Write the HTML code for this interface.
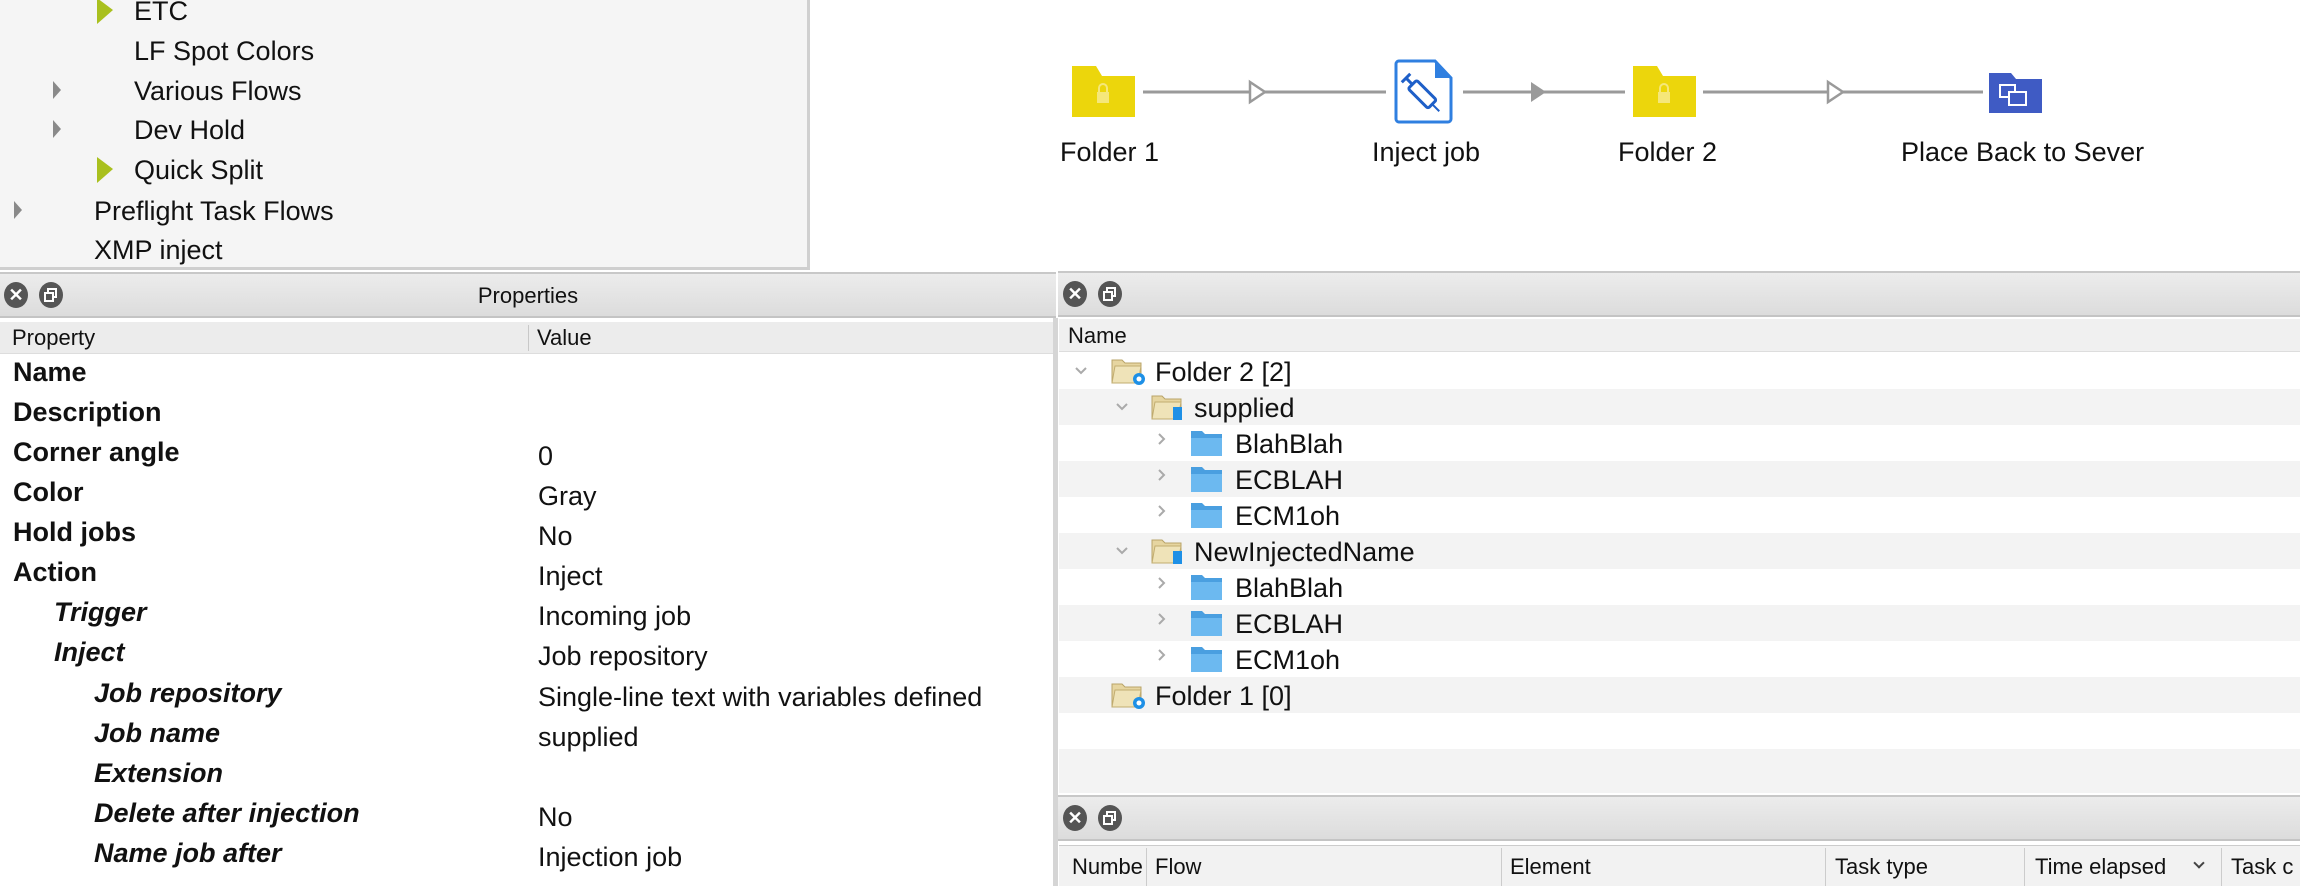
<!DOCTYPE html>
<html><head><meta charset="utf-8"><style>
*{margin:0;padding:0;box-sizing:border-box}
body{width:2300px;height:886px;overflow:hidden;background:#fff;font-family:"Liberation Sans",Arial,sans-serif;color:#111;position:relative}
.a{position:absolute;white-space:nowrap}
.t{font-size:27px;line-height:30px}
.b{font-weight:bold}
.i{font-style:italic;font-weight:bold}
.bar{position:absolute;background:linear-gradient(#ececec,#dcdcdc);border-top:2px solid #c8c8c8;border-bottom:2px solid #c4c4c4}
.hdr{position:absolute;background:#ececec;border-bottom:1px solid #ddd;font-size:21px;color:#222}
.btn{position:absolute;width:24px;height:26px;border-radius:50%;background:#555}
.row{position:absolute;left:1059px;width:1241px;height:36px}
.g{background:#f3f3f3}
.chev{position:absolute;width:10px;height:10px;border-right:2px solid #aaa;border-bottom:2px solid #aaa}
.tr{font-size:27px;line-height:36px}
</style></head><body>

<div class="a" style="left:0;top:0;width:810px;height:270px;background:#f5f5f5;border-right:3px solid #d0d0d0;border-bottom:3px solid #cfcfcf"></div>
<div class="a t" style="left:134px;top:-4px">ETC</div>
<div class="a t" style="left:134px;top:36px">LF Spot Colors</div>
<div class="a t" style="left:134px;top:76px">Various Flows</div>
<div class="a t" style="left:134px;top:115px">Dev Hold</div>
<div class="a t" style="left:134px;top:155px">Quick Split</div>
<div class="a t" style="left:94px;top:196px">Preflight Task Flows</div>
<div class="a t" style="left:94px;top:235px">XMP inject</div>
<svg class="a" style="left:0;top:0" width="130" height="270">
<polygon points="97,-2 113,10 97,24" fill="#a9c01e"/>
<polygon points="97,157 113,169 97,183" fill="#a9c01e"/>
<polygon points="53,81 61,90 53,99" fill="#8a8a8a"/>
<polygon points="53,120 61,129 53,138" fill="#8a8a8a"/>
<polygon points="14,201 22,210 14,219" fill="#8a8a8a"/>
</svg>

<svg class="a" style="left:813px;top:0" width="1487" height="268">
<g stroke="#9a9a9a" stroke-width="3" fill="none">
<line x1="330" y1="92" x2="573" y2="92"/>
<line x1="650" y1="92" x2="812" y2="92"/>
<line x1="890" y1="92" x2="1170" y2="92"/>
</g>
<polygon points="437,82 452,92 437,102" fill="#fff" stroke="#9a9a9a" stroke-width="2.5"/>
<polygon points="718,82 733,92 718,102" fill="#9a9a9a"/>
<polygon points="1015,82 1030,92 1015,102" fill="#fff" stroke="#9a9a9a" stroke-width="2.5"/>
<path d="M259,66 h24 l6,10 h33 v41 h-63z" fill="#ecd60c"/>
<rect x="284" y="92" width="12" height="11" fill="#f5e77a"/><path d="M286,92 v-4 a4,4 0 0 1 8,0 v4" stroke="#f5e77a" stroke-width="2" fill="none"/>
<path d="M820,66 h24 l6,10 h33 v41 h-63z" fill="#ecd60c"/>
<rect x="845" y="92" width="12" height="11" fill="#f5e77a"/><path d="M847,92 v-4 a4,4 0 0 1 8,0 v4" stroke="#f5e77a" stroke-width="2" fill="none"/>
<path d="M586,61 h36 l16,17 v41 a3,3 0 0 1 -3,3 h-49 a3,3 0 0 1 -3,-3 v-55 a3,3 0 0 1 3,-3z" fill="#fff" stroke="#2f7fe0" stroke-width="3"/>
<path d="M622,61 v17 h16z" fill="#2f7fe0"/>
<g transform="rotate(-45 610 95)"><rect x="604" y="80" width="12" height="28" rx="2" fill="#fff" stroke="#1e5fc8" stroke-width="3"/><line x1="610" y1="70" x2="610" y2="80" stroke="#1e5fc8" stroke-width="3"/><line x1="604" y1="71" x2="616" y2="71" stroke="#1e5fc8" stroke-width="3"/><line x1="610" y1="108" x2="610" y2="118" stroke="#1e5fc8" stroke-width="2"/></g>
<path d="M1176,73 h22 l5,6 h26 v34 h-53z" fill="#3f5bc4"/>
<rect x="1187" y="85" width="15" height="12" fill="none" stroke="#fff" stroke-width="2"/>
<rect x="1196" y="92" width="17" height="13" fill="#3f5bc4" stroke="#fff" stroke-width="2"/>
</svg>
<div class="a t" style="left:1060px;top:137px">Folder 1</div>
<div class="a t" style="left:1372px;top:137px">Inject job</div>
<div class="a t" style="left:1618px;top:137px">Folder 2</div>
<div class="a t" style="left:1901px;top:137px">Place Back to Sever</div>

<div class="bar" style="left:0;top:272px;width:1056px;height:46px"></div>
<div class="btn" style="left:4px;top:282px"></div><div class="btn" style="left:39px;top:282px"></div>
<div class="a" style="left:4px;top:282px;width:24px;height:26px;color:#fff;font-size:18px;font-weight:bold;text-align:center;line-height:26px">✕</div>
<svg class="a" style="left:39px;top:282px" width="24" height="26"><rect x="9" y="7" width="8" height="8" fill="none" stroke="#fff" stroke-width="2"/><rect x="6" y="11" width="8" height="8" fill="#555" stroke="#fff" stroke-width="2"/></svg>
<div class="a" style="left:0;top:280px;width:1056px;text-align:center;font-size:22px;line-height:32px">Properties</div>
<div class="hdr" style="left:0;top:322px;width:1053px;height:32px"></div>
<div class="a" style="left:528px;top:325px;width:1px;height:26px;background:#c8c8c8"></div>
<div class="a" style="left:12px;top:323px;font-size:22px;line-height:30px">Property</div>
<div class="a" style="left:537px;top:323px;font-size:22px;line-height:30px">Value</div>
<div class="a" style="left:1053px;top:318px;width:5px;height:568px;background:#d5d5d5"></div>

<div class="a t b" style="left:13px;top:357px">Name</div>
<div class="a t b" style="left:13px;top:397px">Description</div>
<div class="a t b" style="left:13px;top:437px">Corner angle</div>
<div class="a t b" style="left:13px;top:477px">Color</div>
<div class="a t b" style="left:13px;top:517px">Hold jobs</div>
<div class="a t b" style="left:13px;top:557px">Action</div>
<div class="a t i" style="left:54px;top:597px">Trigger</div>
<div class="a t i" style="left:54px;top:637px">Inject</div>
<div class="a t i" style="left:94px;top:678px">Job repository</div>
<div class="a t i" style="left:94px;top:718px">Job name</div>
<div class="a t i" style="left:94px;top:758px">Extension</div>
<div class="a t i" style="left:94px;top:798px">Delete after injection</div>
<div class="a t i" style="left:94px;top:838px">Name job after</div>

<div class="a t" style="left:538px;top:441px">0</div>
<div class="a t" style="left:538px;top:481px">Gray</div>
<div class="a t" style="left:538px;top:521px">No</div>
<div class="a t" style="left:538px;top:561px">Inject</div>
<div class="a t" style="left:538px;top:601px">Incoming job</div>
<div class="a t" style="left:538px;top:641px">Job repository</div>
<div class="a t" style="left:538px;top:682px">Single-line text with variables defined</div>
<div class="a t" style="left:538px;top:722px">supplied</div>
<div class="a t" style="left:538px;top:802px">No</div>
<div class="a t" style="left:538px;top:842px">Injection job</div>

<div class="bar" style="left:1058px;top:271px;width:1242px;height:46px"></div>
<div class="btn" style="left:1063px;top:281px"></div><div class="btn" style="left:1098px;top:281px"></div>
<div class="a" style="left:1063px;top:281px;width:24px;height:26px;color:#fff;font-size:18px;font-weight:bold;text-align:center;line-height:26px">✕</div>
<svg class="a" style="left:1098px;top:281px" width="24" height="26"><rect x="9" y="7" width="8" height="8" fill="none" stroke="#fff" stroke-width="2"/><rect x="6" y="11" width="8" height="8" fill="#555" stroke="#fff" stroke-width="2"/></svg>
<div class="hdr" style="left:1059px;top:319px;width:1241px;height:33px;background:#f0f0f0"></div>
<div class="a" style="left:1068px;top:320px;font-size:22px;line-height:32px">Name</div>

<div class="row" style="top:353px"></div>
<div class="row g" style="top:389px"></div>
<div class="row" style="top:425px"></div>
<div class="row g" style="top:461px"></div>
<div class="row" style="top:497px"></div>
<div class="row g" style="top:533px"></div>
<div class="row" style="top:569px"></div>
<div class="row g" style="top:605px"></div>
<div class="row" style="top:641px"></div>
<div class="row g" style="top:677px"></div>
<div class="row" style="top:713px;height:36px"></div>
<div class="row g" style="top:749px;height:44px"></div>

<svg class="a" style="left:1059px;top:353px" width="200" height="360">
<defs>
<g id="yf"><path d="M0,4 h10 l3,3 h16 v20 h-29z" fill="#e6d5a0" stroke="#b9a468" stroke-width="1"/><path d="M3,10 h26 l-3,17 h-26z" fill="#efe3b8" stroke="#c2ad70" stroke-width="1"/></g>
<g id="bf"><path d="M0,2 h11 l3,3 h17 v22 h-31z" fill="#4a9fe0"/><rect x="0" y="9" width="31" height="18" fill="#6cb9f0"/></g>
</defs>
<g fill="none" stroke="#aaa" stroke-width="2">
<path d="M17,15 l5,5 5,-5"/><path d="M58,51 l5,5 5,-5"/><path d="M58,195 l5,5 5,-5"/>
<path d="M100,81 l5,5 -5,5"/><path d="M100,117 l5,5 -5,5"/><path d="M100,153 l5,5 -5,5"/>
<path d="M100,225 l5,5 -5,5"/><path d="M100,261 l5,5 -5,5"/><path d="M100,297 l5,5 -5,5"/>
</g>
<use href="#yf" x="53" y="3"/><circle cx="80" cy="26" r="6" fill="#1e90e6"/><circle cx="80" cy="26" r="2.5" fill="#fff"/>
<use href="#yf" x="93" y="39"/><rect x="114" y="54" width="9" height="13" fill="#1e90e6"/>
<use href="#yf" x="93" y="183"/><rect x="114" y="198" width="9" height="13" fill="#1e90e6"/>
<use href="#yf" x="53" y="327"/><circle cx="80" cy="350" r="6" fill="#1e90e6"/><circle cx="80" cy="350" r="2.5" fill="#fff"/>
<use href="#bf" x="132" y="76"/><use href="#bf" x="132" y="112"/><use href="#bf" x="132" y="148"/>
<use href="#bf" x="132" y="220"/><use href="#bf" x="132" y="256"/><use href="#bf" x="132" y="292"/>
</svg>
<div class="a tr" style="left:1155px;top:354px">Folder 2 [2]</div>
<div class="a tr" style="left:1194px;top:390px">supplied</div>
<div class="a tr" style="left:1235px;top:426px">BlahBlah</div>
<div class="a tr" style="left:1235px;top:462px">ECBLAH</div>
<div class="a tr" style="left:1235px;top:498px">ECM1oh</div>
<div class="a tr" style="left:1194px;top:534px">NewInjectedName</div>
<div class="a tr" style="left:1235px;top:570px">BlahBlah</div>
<div class="a tr" style="left:1235px;top:606px">ECBLAH</div>
<div class="a tr" style="left:1235px;top:642px">ECM1oh</div>
<div class="a tr" style="left:1155px;top:678px">Folder 1 [0]</div>

<div class="bar" style="left:1058px;top:795px;width:1242px;height:46px"></div>
<div class="btn" style="left:1063px;top:805px"></div><div class="btn" style="left:1098px;top:805px"></div>
<div class="a" style="left:1063px;top:805px;width:24px;height:26px;color:#fff;font-size:18px;font-weight:bold;text-align:center;line-height:26px">✕</div>
<svg class="a" style="left:1098px;top:805px" width="24" height="26"><rect x="9" y="7" width="8" height="8" fill="none" stroke="#fff" stroke-width="2"/><rect x="6" y="11" width="8" height="8" fill="#555" stroke="#fff" stroke-width="2"/></svg>
<div class="a" style="left:1059px;top:845px;width:1241px;height:41px;background:#f2f2f2;border-top:1px solid #ccc"></div>
<div class="a" style="left:1146px;top:848px;width:1px;height:38px;background:#ccc"></div>
<div class="a" style="left:1501px;top:848px;width:1px;height:38px;background:#ccc"></div>
<div class="a" style="left:1825px;top:848px;width:1px;height:38px;background:#ccc"></div>
<div class="a" style="left:2024px;top:848px;width:1px;height:38px;background:#ccc"></div>
<div class="a" style="left:2221px;top:848px;width:1px;height:38px;background:#ccc"></div>
<div class="a" style="left:1072px;top:850px;width:70px;overflow:hidden;font-size:22px;line-height:34px">Number</div>
<div class="a" style="left:1155px;top:850px;font-size:22px;line-height:34px">Flow</div>
<div class="a" style="left:1510px;top:850px;font-size:22px;line-height:34px">Element</div>
<div class="a" style="left:1835px;top:850px;font-size:22px;line-height:34px">Task type</div>
<div class="a" style="left:2035px;top:850px;font-size:22px;line-height:34px">Time elapsed</div>
<div class="chev" style="left:2195px;top:859px;transform:rotate(45deg);border-color:#444;width:8px;height:8px"></div>
<div class="a" style="left:2231px;top:850px;font-size:22px;line-height:34px">Task c</div>
</body></html>
